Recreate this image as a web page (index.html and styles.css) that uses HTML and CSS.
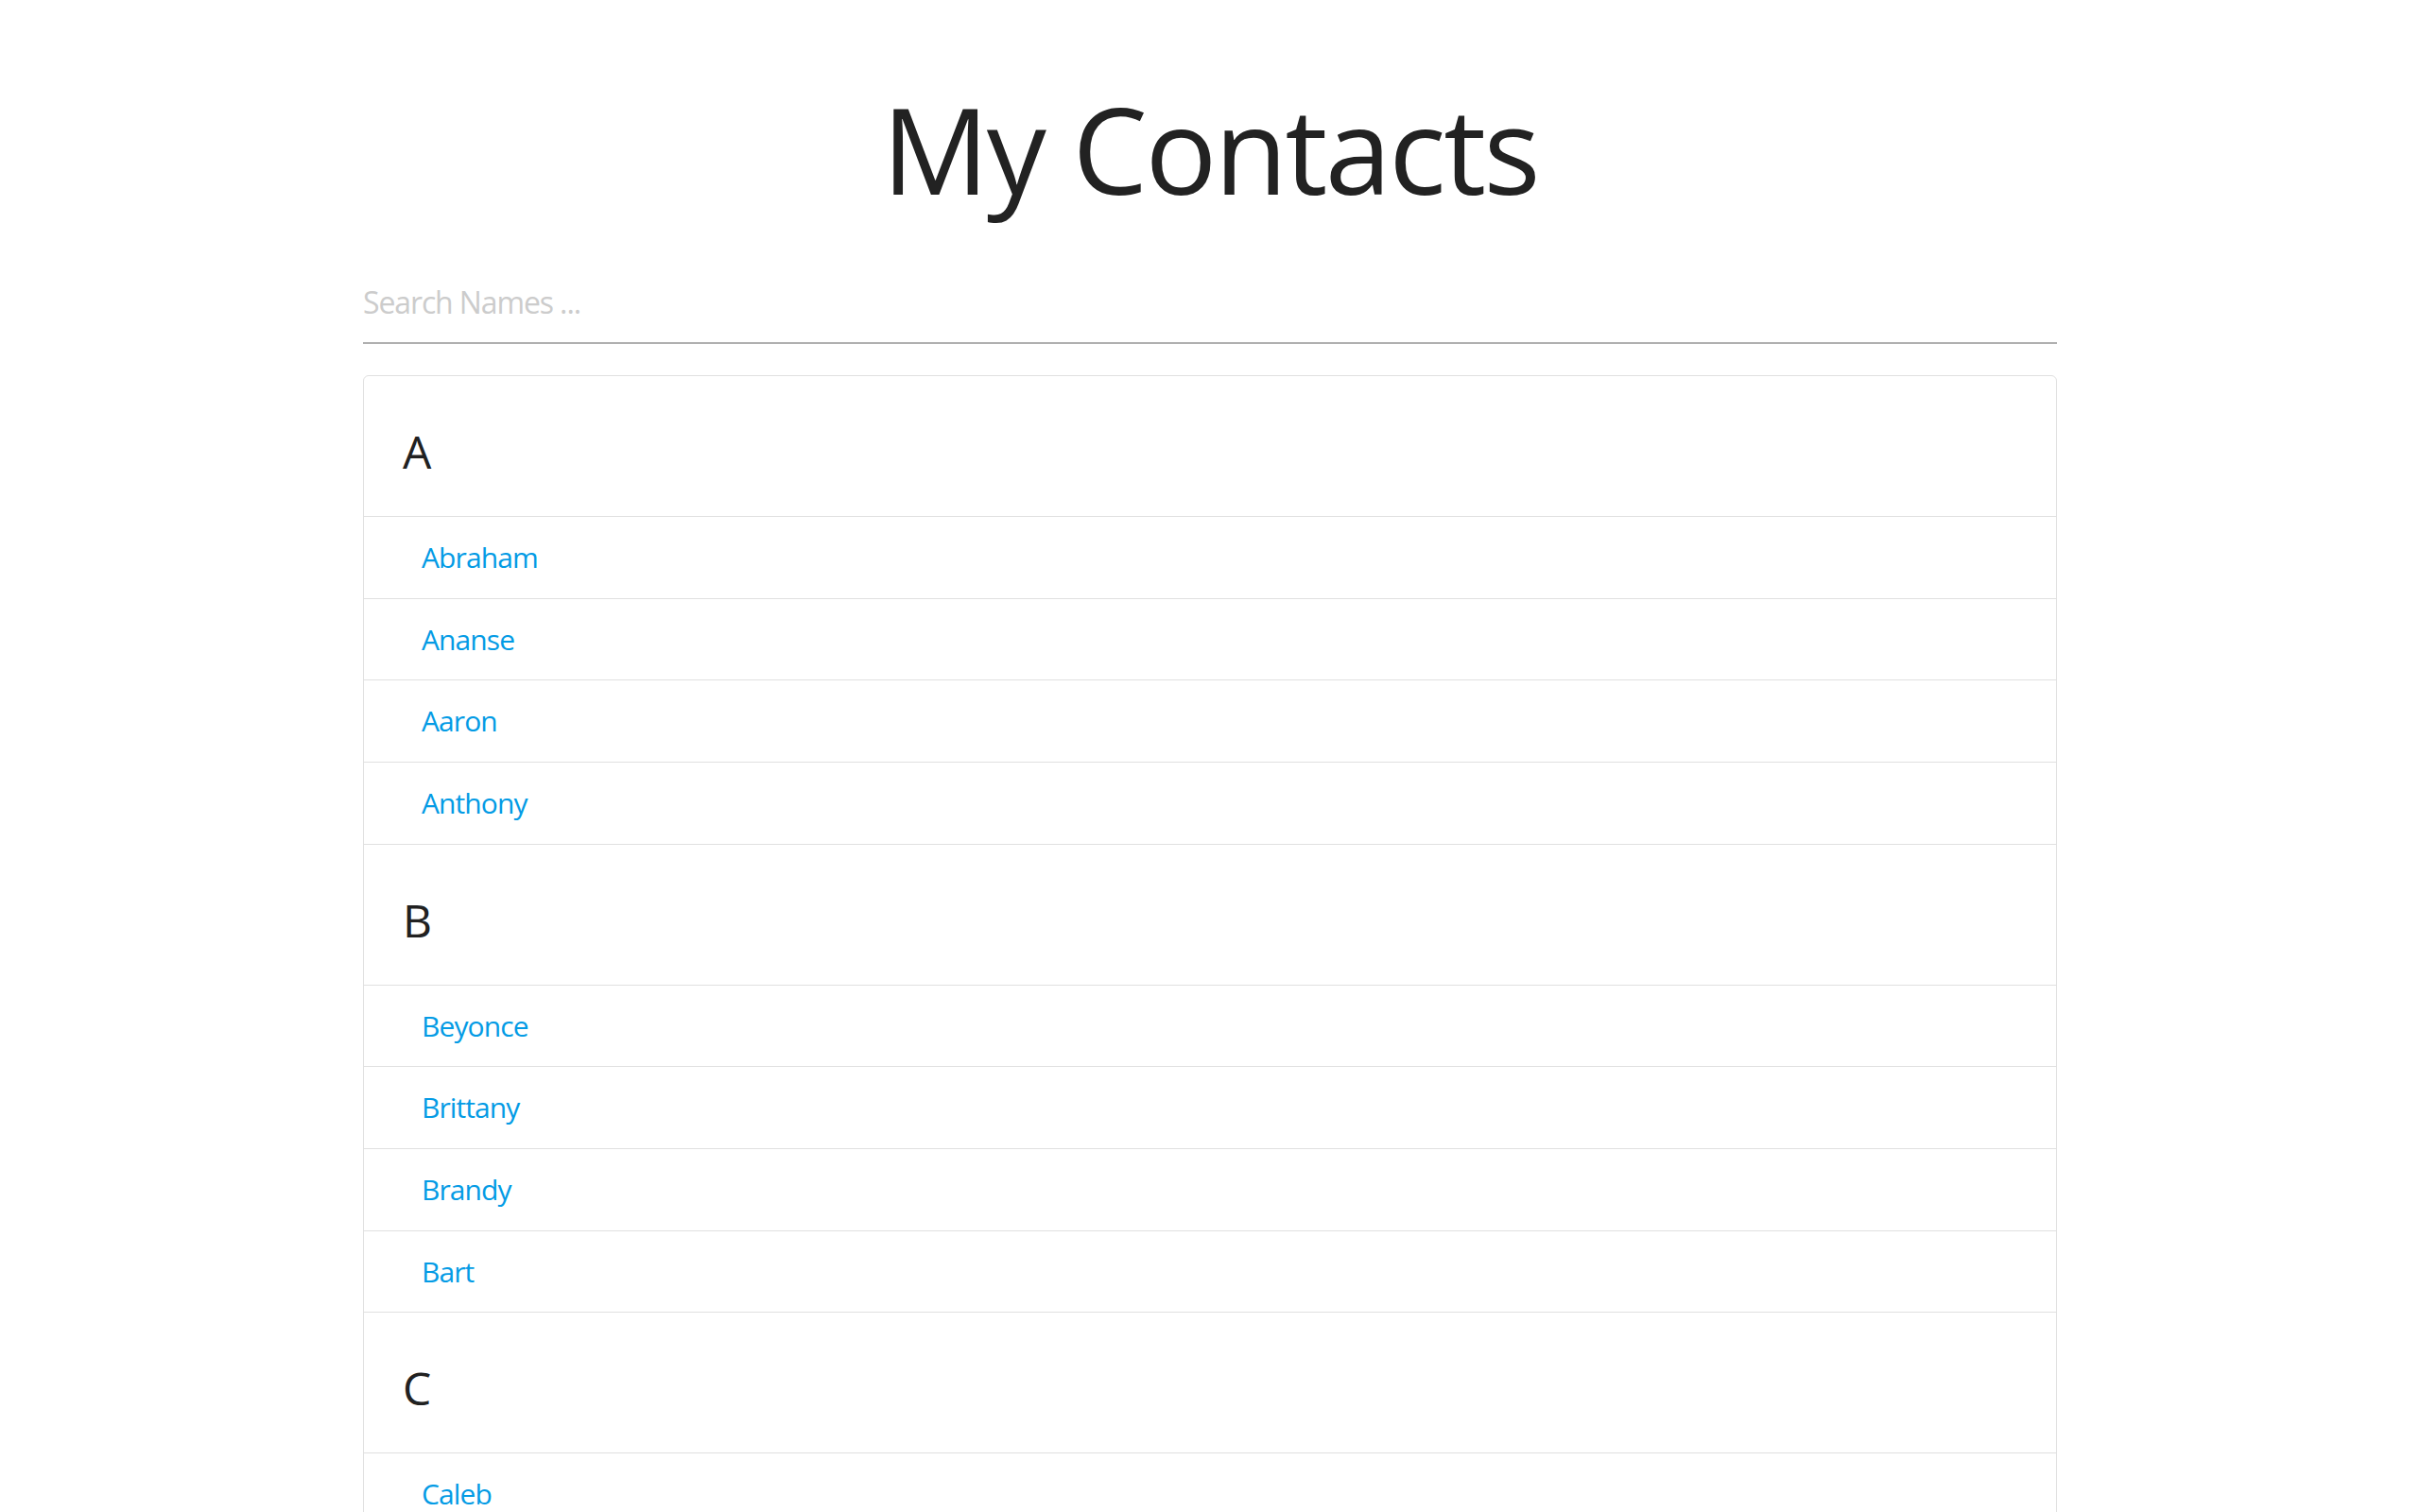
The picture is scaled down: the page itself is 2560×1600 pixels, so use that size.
FILE: index.html
```html
<!DOCTYPE html>
<html lang="en">
<head>
<meta charset="utf-8">
<title>My Contacts</title>
<link rel="stylesheet" href="styles.css">
</head>
<body>
<main class="page">
  <h1 class="title">My Contacts</h1>
  <input class="search" type="text" placeholder="Search Names ...">
  <div class="card">
    <section class="group">
      <h2 class="group-letter">A</h2>
      <a class="contact" href="#">Abraham</a>
      <a class="contact" href="#">Ananse</a>
      <a class="contact" href="#">Aaron</a>
      <a class="contact" href="#">Anthony</a>
    </section>
    <section class="group">
      <h2 class="group-letter">B</h2>
      <a class="contact" href="#">Beyonce</a>
      <a class="contact" href="#">Brittany</a>
      <a class="contact" href="#">Brandy</a>
      <a class="contact" href="#">Bart</a>
    </section>
    <section class="group">
      <h2 class="group-letter">C</h2>
      <a class="contact" href="#">Caleb</a>
    </section>
  </div>
</main>
</body>
</html>
```

FILE: styles.css
```css
* { box-sizing: border-box; }

html, body {
  margin: 0;
  padding: 0;
  background: #ffffff;
}

body {
  font-family: "Open Sans", "Noto Sans", "Liberation Sans", sans-serif;
  color: #212121;
}

.page {
  width: 1792px;
  margin: 0 auto;
  padding-top: 82px;
  display: flex;
  flex-direction: column;
}

.title {
  margin: 0;
  font-size: 126px;
  line-height: 151px;
  font-weight: 400;
  text-align: center;
  color: #222222;
  letter-spacing: -0.02em;
}

.search {
  margin-top: 62px;
  width: 100%;
  border: none;
  border-bottom: 2px solid #b0b0b0;
  padding: 0 0 19px 0;
  font-family: inherit;
  font-size: 32px;
  line-height: 48px;
  height: 69px;
  letter-spacing: -0.035em;
  color: #212121;
  outline: none;
  background: transparent;
}

.search::placeholder {
  color: #cccccc;
}

.card {
  margin-top: 33px;
  border: 1px solid #e0e0e0;
  border-radius: 6px;
  display: flex;
  flex-direction: column;
}

.group {
  display: flex;
  flex-direction: column;
}

.group + .group {
  border-top: 1px solid #e0e0e0;
}

.group-letter {
  margin: 0;
  padding: 51px 42px 39px 41px;
  font-size: 48px;
  line-height: 58px;
  font-weight: 400;
  color: #212121;
}

.contact {
  display: block;
  border-top: 1px solid #e0e0e0;
  padding: 20px 62px 20.67px 61px;
  font-size: 30px;
  line-height: 45px;
  color: #039be5;
  text-decoration: none;
  letter-spacing: -0.03em;
}
```
